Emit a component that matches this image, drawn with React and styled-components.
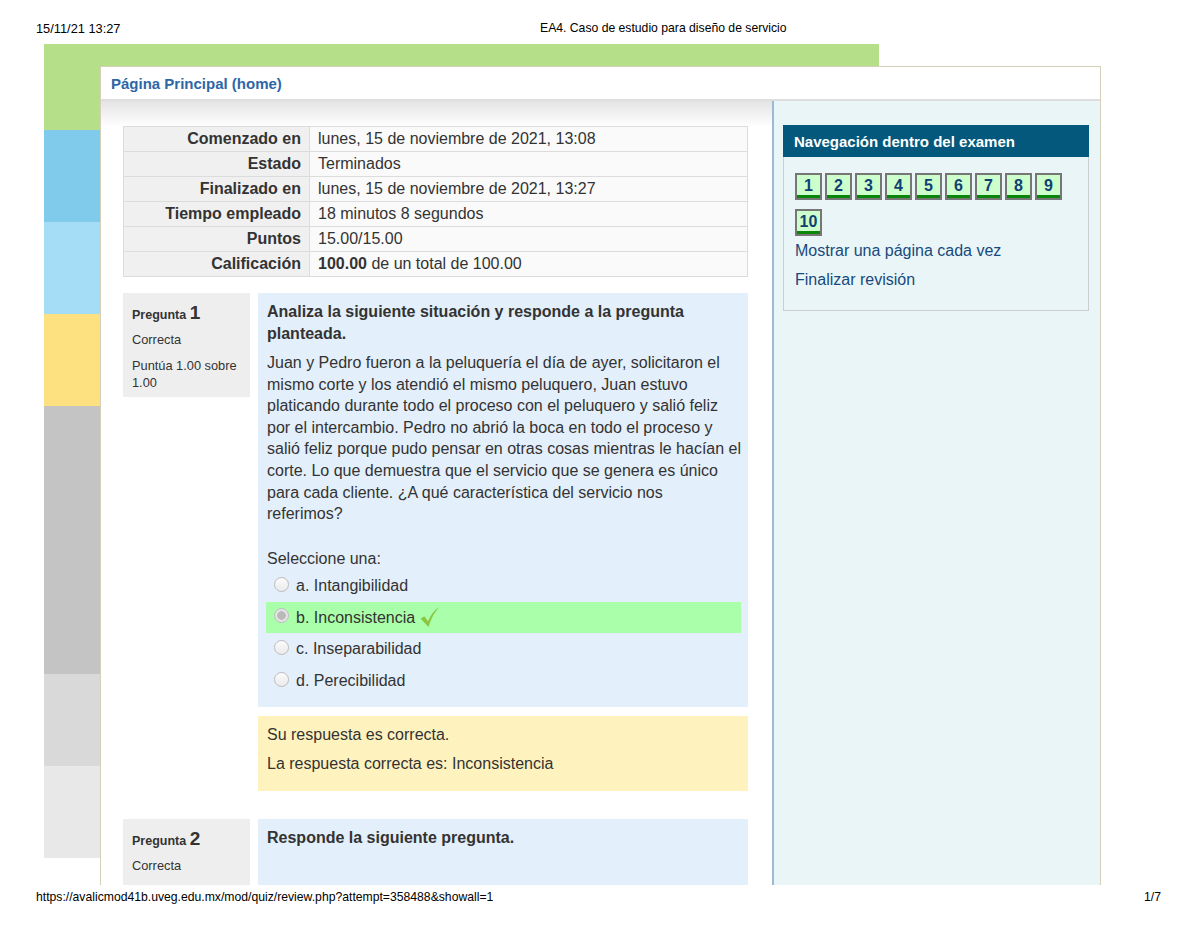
import React from "react";
import styled, { createGlobalStyle } from "styled-components";

const Global = createGlobalStyle`
  html, body { margin: 0; padding: 0; background: #fff; }
  body { font-family: "Liberation Sans", Arial, sans-serif; color: #333; }
`;

const Sheet = styled.div`
  width: 1200px;
  height: 927px;
  display: flex;
  flex-direction: column;
  overflow: hidden;
`;

const PrintBar = styled.div`
  height: ${(p) => p.$h}px;
  box-sizing: border-box;
  padding: ${(p) => p.$pt}px 36px 0 36px;
  display: grid;
  grid-template-columns: ${(p) => p.$cols};
  font-size: 12.2px;
  line-height: 15px;
  color: #000;
  white-space: nowrap;
`;

const PrintDate = styled.span`
  font-size: 12.8px;
`;

const PrintRight = styled.span`
  text-align: right;
  padding-right: 3px;
`;

const Canvas = styled.div`
  height: 841px;
  margin-left: 44px;
  padding: 22px 0 0 56px;
  box-sizing: border-box;
  overflow: hidden;
  background:
    linear-gradient(#b5df88, #b5df88) 0 0 / 835px 86px no-repeat,
    linear-gradient(
        to bottom,
        #b5df88 0 86px,
        #80cbeb 86px 178px,
        #a6ddf6 178px 270px,
        #fde07f 270px 362px,
        #c4c4c4 362px 630px,
        #d9d9d9 630px 722px,
        #e8e8e8 722px 814px,
        transparent 814px
      )
      0 0 / 56px 100% no-repeat;
`;

const Page = styled.div`
  width: 1001px;
  height: 100%;
  box-sizing: border-box;
  background: #fff;
  border: 1px solid #d5d1b8;
  border-bottom: none;
  display: flex;
  flex-direction: column;
`;

const PageHeader = styled.div`
  height: 32px;
  flex: none;
  border-bottom: 2px solid #dedede;
  padding-left: 10px;
  display: flex;
  align-items: center;
`;

const HomeLink = styled.a`
  font-size: 15px;
  font-weight: bold;
  color: #2d67a6;
  text-decoration: none;
`;

const Body = styled.div`
  flex: 1;
  display: grid;
  grid-template-columns: 671px 1fr;
  min-height: 0;
`;

const Main = styled.div`
  padding: 25px 24px 0 22px;
  background: linear-gradient(#e4e4e4, #fff 26px);
`;

const Summary = styled.table`
  width: 625px;
  border-collapse: collapse;
  font-size: 16px;
  margin-bottom: 16px;
`;

const Row = styled.tr`
  height: 25px;
`;

const Label = styled.th`
  width: 169px;
  padding: 0 8px 0 8px;
  text-align: right;
  font-weight: bold;
  background: #f0f0f0;
  border: 1px solid #dcdcdc;
  line-height: 1;
  color: #333;
`;

const Value = styled.td`
  padding: 0 8px;
  background: #fafafa;
  border: 1px solid #dcdcdc;
  line-height: 1;
`;

const Question = styled.div`
  display: grid;
  grid-template-columns: 127px 490px;
  column-gap: 8px;
  align-items: start;
  margin-bottom: 28px;
`;

const Info = styled.div`
  background: #eeeeee;
  padding: 9px 9px 8px 9px;
  font-size: 12.8px;
  line-height: 17px;
  height: ${(p) => (p.$h ? `${p.$h}px` : "auto")};
  box-sizing: border-box;
`;

const QNo = styled.h3`
  margin: 0;
  font-size: 12.5px;
  line-height: 22px;
  font-weight: bold;
`;

const QNum = styled.span`
  font-size: 19px;
`;

const InfoLine = styled.div`
  margin-top: ${(p) => p.$mt}px;
`;

const Stack = styled.div`
  display: flex;
  flex-direction: column;
  gap: 9px;
`;

const Formulation = styled.div`
  background: #e3effa;
  padding: 8px 4px 10px 9px;
  font-size: 16px;
  line-height: 21.6px;
  white-space: nowrap;
  min-height: ${(p) => (p.$minh ? `${p.$minh}px` : "0")};
  box-sizing: border-box;
`;

const QTitle = styled.div`
  font-weight: bold;
  line-height: 22px;
`;

const QText = styled.p`
  margin: 7px 0 0 0;
`;

const Prompt = styled.div`
  margin-top: 23.2px;
  line-height: 22px;
`;

const Options = styled.div`
  margin: 0 3px 0 -1px;
  display: flex;
  flex-direction: column;
`;

const Option = styled.div`
  height: 31.7px;
  display: flex;
  align-items: center;
  gap: 7px;
  padding-left: 8px;
  background: ${(p) => (p.$correct ? "#aaffaa" : "transparent")};
`;

const Radio = styled.span`
  width: 15px;
  height: 15px;
  border-radius: 50%;
  box-sizing: border-box;
  border: 1px solid #bcbcbc;
  background: ${(p) =>
    p.$checked
      ? "radial-gradient(circle, #b9b9b9 0 4px, #e4e4e4 4.6px)"
      : "linear-gradient(#fbfbfb, #ebebeb)"};
  margin-top: -3px;
  flex: none;
`;

const OptText = styled.span`
  display: inline-flex;
  align-items: center;
  gap: 4px;
`;

const Feedback = styled.div`
  background: #fef2bf;
  padding: 8px 9px 16px 9px;
  font-size: 16px;
  line-height: 22px;
`;

const FeedLine = styled.div`
  margin-top: ${(p) => p.$mt || 0}px;
`;

const Side = styled.div`
  background: #e9f5f7;
  border-left: 2px solid #9cbad3;
  padding: 24px 11px 0 9px;
`;

const NavBlock = styled.div`
  border: 1px solid #c9cfd1;
  background: #eaf5f8;
`;

const NavHead = styled.div`
  height: 32px;
  background: #03587b;
  color: #fff;
  font-size: 15px;
  font-weight: bold;
  display: flex;
  align-items: center;
  padding-left: 11px;
  margin: -1px -1px 0 -1px;
`;

const NavBody = styled.div`
  padding: 16px 11px 19px 11px;
`;

const Buttons = styled.div`
  display: flex;
  flex-wrap: wrap;
  column-gap: 3px;
  row-gap: 9px;
  width: 270px;
`;

const NavBtn = styled.a`
  width: 27px;
  height: 27px;
  box-sizing: border-box;
  border: 2px solid #767676;
  background: #ccffcc;
  box-shadow: inset 0 -3px 0 #0a870a;
  color: #123f72;
  font-weight: bold;
  font-size: 16px;
  display: flex;
  align-items: center;
  justify-content: center;
  padding-bottom: 2px;
  text-decoration: none;
`;

const NavLink = styled.a`
  display: block;
  color: #174a7c;
  font-size: 16px;
  line-height: 22px;
  text-decoration: none;
  margin-top: ${(p) => p.$mt}px;
`;

const Check = () => (
  <svg width="22" height="22" viewBox="0 0 20 20" aria-hidden="true">
    <path
      d="M1.5 11.5 L4.8 9.3 L8.2 13.8 C10.5 8.5 13.5 4.2 18.5 1 C14.2 5.8 11.2 11 8.7 19 Z"
      fill="#8cc63f"
    />
  </svg>
);

const summary = [
  ["Comenzado en", "lunes, 15 de noviembre de 2021, 13:08"],
  ["Estado", "Terminados"],
  ["Finalizado en", "lunes, 15 de noviembre de 2021, 13:27"],
  ["Tiempo empleado", "18 minutos 8 segundos"],
  ["Puntos", "15.00/15.00"],
  ["Calificación", null],
];

const paragraph = [
  "Juan y Pedro fueron a la peluquería el día de ayer, solicitaron el",
  "mismo corte y los atendió el mismo peluquero, Juan estuvo",
  "platicando durante todo el proceso con el peluquero y salió feliz",
  "por el intercambio. Pedro no abrió la boca en todo el proceso y",
  "salió feliz porque pudo pensar en otras cosas mientras le hacían el",
  "corte. Lo que demuestra que el servicio que se genera es único",
  "para cada cliente. ¿A qué característica del servicio nos",
  "referimos?",
];

const options = [
  { t: "a. Intangibilidad" },
  { t: "b. Inconsistencia", ok: true },
  { t: "c. Inseparabilidad" },
  { t: "d. Perecibilidad" },
];

export default function App() {
  return (
    <>
      <Global />
      <Sheet>
        <PrintBar $h={44} $pt={21} $cols="504px auto">
          <PrintDate>15/11/21 13:27</PrintDate>
          <span>EA4. Caso de estudio para diseño de servicio</span>
        </PrintBar>
        <Canvas>
          <Page>
            <PageHeader>
              <HomeLink href="#">Página Principal (home)</HomeLink>
            </PageHeader>
            <Body>
              <Main>
                <Summary>
                  <tbody>
                    {summary.map(([k, v]) => (
                      <Row key={k}>
                        <Label>{k}</Label>
                        <Value>
                          {v ?? (
                            <>
                              <b>100.00</b> de un total de 100.00
                            </>
                          )}
                        </Value>
                      </Row>
                    ))}
                  </tbody>
                </Summary>

                <Question>
                  <Info $h={104}>
                    <QNo>
                      Pregunta <QNum>1</QNum>
                    </QNo>
                    <InfoLine $mt={5}>Correcta</InfoLine>
                    <InfoLine $mt={9}>
                      Puntúa 1.00 sobre
                      <br />
                      1.00
                    </InfoLine>
                  </Info>
                  <Stack>
                    <Formulation>
                      <QTitle>
                        Analiza la siguiente situación y responde a la pregunta
                        <br />
                        planteada.
                      </QTitle>
                      <QText>
                        {paragraph.map((l, i) => (
                          <React.Fragment key={i}>
                            {l}
                            {i < paragraph.length - 1 && <br />}
                          </React.Fragment>
                        ))}
                      </QText>
                      <Prompt>Seleccione una:</Prompt>
                      <Options>
                        {options.map((o) => (
                          <Option key={o.t} $correct={o.ok}>
                            <Radio $checked={o.ok} />
                            <OptText>
                              {o.t}
                              {o.ok && <Check />}
                            </OptText>
                          </Option>
                        ))}
                      </Options>
                    </Formulation>
                    <Feedback>
                      <FeedLine>Su respuesta es correcta.</FeedLine>
                      <FeedLine $mt={7}>
                        La respuesta correcta es: Inconsistencia
                      </FeedLine>
                    </Feedback>
                  </Stack>
                </Question>

                <Question>
                  <Info $h={120}>
                    <QNo>
                      Pregunta <QNum>2</QNum>
                    </QNo>
                    <InfoLine $mt={5}>Correcta</InfoLine>
                  </Info>
                  <Formulation $minh={120}>
                    <QTitle>Responde la siguiente pregunta.</QTitle>
                  </Formulation>
                </Question>
              </Main>
              <Side>
                <NavBlock>
                  <NavHead>Navegación dentro del examen</NavHead>
                  <NavBody>
                    <Buttons>
                      {Array.from({ length: 10 }, (_, i) => (
                        <NavBtn key={i} href="#">
                          {i + 1}
                        </NavBtn>
                      ))}
                    </Buttons>
                    <NavLink href="#" $mt={4}>
                      Mostrar una página cada vez
                    </NavLink>
                    <NavLink href="#" $mt={7}>
                      Finalizar revisión
                    </NavLink>
                  </NavBody>
                </NavBlock>
              </Side>
            </Body>
          </Page>
        </Canvas>
        <PrintBar $h={42} $pt={5} $cols="1fr auto">
          <span>https://avalicmod41b.uveg.edu.mx/mod/quiz/review.php?attempt=358488&amp;showall=1</span>
          <PrintRight>1/7</PrintRight>
        </PrintBar>
      </Sheet>
    </>
  );
}
